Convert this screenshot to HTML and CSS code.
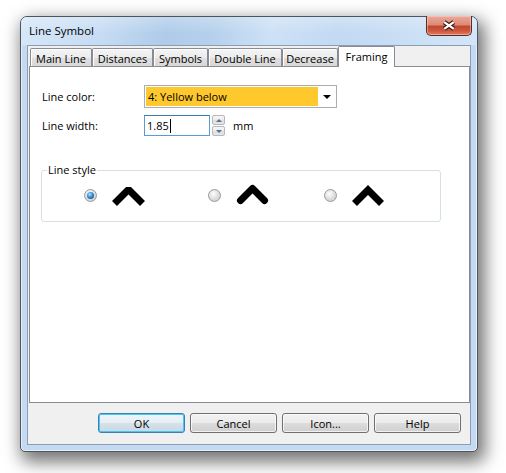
FILE: index.html
```html
<!DOCTYPE html>
<html lang="en">
<head>
    <meta charset="UTF-8">
    <title>Line Symbol</title>
    <link rel="stylesheet" href="styles.css">
</head>
<body>
    <div class="window">
        <div class="titlebar">
            <span class="title">Line Symbol</span>
            <button class="close-btn" title="Close">
                <svg width="46" height="19" viewBox="0 0 46 19">
                    <path d="M18 6 L28 13 M28 6 L18 13" stroke="#3b1710" stroke-width="4.6" fill="none"/>
                    <path d="M18 6 L28 13 M28 6 L18 13" stroke="#fff" stroke-width="2.4" fill="none"/>
                </svg>
            </button>
        </div>

        <div class="client">
            <ul class="tabs">
                <li class="tab">Main Line</li>
                <li class="tab">Distances</li>
                <li class="tab">Symbols</li>
                <li class="tab">Double Line</li>
                <li class="tab">Decrease</li>
                <li class="tab active">Framing</li>
            </ul>

            <div class="panel">
                <div class="form">
                    <label>Line color:</label>
                    <div class="combo">
                        <span class="combo-value">4: Yellow below</span>
                        <span class="combo-arrow"></span>
                    </div>

                    <label>Line width:</label>
                    <div class="width-field">
                        <div class="edit">1.85<span class="caret"></span></div>
                        <div class="spin">
                            <span class="spin-btn up"></span>
                            <span class="spin-btn down"></span>
                        </div>
                        <span class="unit">mm</span>
                    </div>
                </div>

                <fieldset class="group">
                    <legend>Line style</legend>
                    <div class="style-row">
                        <div class="style-option">
                            <span class="radio checked"></span>
                            <svg width="36" height="26" viewBox="0 0 36 26">
                                <polyline points="4.5,21.5 18.5,7.5 32.5,21.5" fill="none" stroke="#000" stroke-width="7" stroke-linejoin="bevel" stroke-linecap="butt"/>
                            </svg>
                        </div>
                        <div class="style-option">
                            <span class="radio"></span>
                            <svg width="36" height="26" viewBox="0 0 36 26">
                                <polyline points="6.5,18.5 18.5,6.5 30.5,18.5" fill="none" stroke="#000" stroke-width="7" stroke-linejoin="round" stroke-linecap="round"/>
                            </svg>
                        </div>
                        <div class="style-option">
                            <span class="radio"></span>
                            <svg width="36" height="26" viewBox="0 0 36 26">
                                <polyline points="4.5,21.5 18,8 31.5,21.5" fill="none" stroke="#000" stroke-width="7" stroke-linejoin="miter" stroke-linecap="butt"/>
                            </svg>
                        </div>
                    </div>
                </fieldset>
            </div>

            <div class="buttons">
                <button class="btn default">OK</button>
                <button class="btn">Cancel</button>
                <button class="btn">Icon...</button>
                <button class="btn">Help</button>
            </div>
        </div>
    </div>
</body>
</html>
```

FILE: styles.css
```css
*{
    box-sizing: border-box;
}

body{
    margin: 0;
    min-height: 100vh;
    padding: 16px 0 0 20px;
    background: #fff;
    color: #000;
    font: 11px "Segoe UI", "Open Sans", sans-serif;
}

/* window frame */
.window{
    width: 458px;
    height: 436px;
    padding: 0 6px 6px;
    display: flex;
    flex-direction: column;
    border: 1px solid #4d555e;
    border-radius: 7px 7px 5px 5px;
    background: #c3daf2;
    box-shadow: inset 0 0 0 1px rgba(255,255,255,.6), 4px 7px 17px 3px rgba(0,0,0,.55);
}

.titlebar{
    height: 28px;
    margin: 0 -6px;
    padding: 0 5px 0 8px;
    display: flex;
    justify-content: space-between;
    align-items: flex-start;
    border-radius: 6px 6px 0 0;
    background:
        linear-gradient(rgba(255,255,255,.25), rgba(255,255,255,0) 60%),
        linear-gradient(100deg, #d6e7f8 0%, #c6dcf3 18%, #aecbe9 32%, #b5d0ec 42%, #cde1f6 55%, #c2d9f2 70%, #d3e5f8 100%);
}

.title{
    padding-top: 6px;
    line-height: 16px;
    font-size: 11.5px;
}

.close-btn{
    width: 46px;
    height: 20px;
    margin-top: -1px;
    padding: 0;
    display: flex;
    border: 1px solid #5e2b22;
    border-top: none;
    border-radius: 0 0 5px 5px;
    background: linear-gradient(#e9aa9b, #dd8b77 45%, #c4472e 55%, #cc5a40 80%, #e07f63);
    box-shadow: inset 0 0 0 1px rgba(255,220,210,.45);
}

/* client area */
.client{
    flex: 1;
    display: flex;
    flex-direction: column;
    padding-bottom: 11px;
    border: 1px solid #8c9db2;
    background: #f0f0f0;
}

.tabs{
    height: 20px;
    margin: 0;
    padding: 0 0 0 2px;
    list-style: none;
    display: grid;
    grid-template-columns: 62px 61px 55px 74px 56px 57px;
    align-items: end;
}

.tab{
    height: 18px;
    line-height: 17px;
    padding-top: 1px;
    text-align: center;
    white-space: nowrap;
    border: 1px solid #898c95;
    border-bottom: none;
    border-radius: 2px 2px 0 0;
    background: linear-gradient(#f4f4f4, #ececec 50%, #e0e0e0 50%, #d8d8d8);
    box-shadow: inset 1px 1px 0 #fff;
}

.tab.active{
    position: relative;
    z-index: 1;
    height: 21px;
    margin-bottom: -1px;
    padding-top: 0;
    line-height: 19px;
    background: #fff;
    box-shadow: none;
}

.panel{
    height: 337px;
    margin-left: 1px;
    border: 1px solid #898c95;
    background: #fff;
}

/* fields */
.form{
    padding: 18px 0 0 12px;
    display: grid;
    grid-template-columns: 102px auto;
    row-gap: 7px;
    align-items: center;
}

.combo{
    width: 193px;
    height: 23px;
    padding: 1px;
    display: flex;
    border: 1px solid #abadb3;
    background: #fff;
}

.combo-value{
    width: 172px;
    padding-left: 2px;
    line-height: 19px;
    background: #ffc82c;
}

.combo-arrow{
    flex: 1;
    display: flex;
    justify-content: center;
    align-items: center;
}

.combo-arrow::after{
    content: "";
    border-left: 4px solid transparent;
    border-right: 4px solid transparent;
    border-top: 4px solid #000;
}

.width-field{
    display: flex;
    align-items: center;
}

.edit{
    width: 66px;
    height: 21px;
    padding-left: 2px;
    line-height: 19px;
    border: 1px solid #5a9bd6;
    border-top-color: #3d7bad;
    background: #fff;
}

.caret{
    display: inline-block;
    width: 1px;
    height: 14px;
    margin-left: 1px;
    vertical-align: -3px;
    background: #000;
}

.spin{
    margin-left: 2px;
    display: flex;
    flex-direction: column;
    gap: 1px;
}

.spin-btn{
    width: 13px;
    height: 10px;
    display: flex;
    justify-content: center;
    align-items: center;
    border: 1px solid #b8b8b8;
    border-radius: 2px;
    background: linear-gradient(#f7f7f7, #ececec 50%, #dedede 50%, #e6e6e6);
}

.spin-btn.up::after{
    content: "";
    border-left: 3px solid transparent;
    border-right: 3px solid transparent;
    border-bottom: 3px solid #5b6f97;
}

.spin-btn.down::after{
    content: "";
    border-left: 3px solid transparent;
    border-right: 3px solid transparent;
    border-top: 3px solid #5b6f97;
}

.unit{
    margin-left: 8px;
}

/* line style group */
.group{
    width: 400px;
    margin: 26px 0 0 11px;
    padding: 4px 0 13px;
    border: 1px solid #d5dfe5;
    border-radius: 3px;
}

.group legend{
    margin-left: 5px;
    padding: 0 1px;
    line-height: 16px;
}

.style-row{
    padding-left: 42px;
    display: grid;
    grid-template-columns: 124px 116px auto;
}

.style-option{
    display: flex;
    align-items: center;
    gap: 13px;
}

.radio{
    position: relative;
    width: 13px;
    height: 13px;
    border: 1px solid #9a9a9a;
    border-radius: 50%;
    background: radial-gradient(circle at 40% 35%, #fdfdfd, #dcdcdc 55%, #c6c6c6);
}

.radio.checked::after{
    content: "";
    position: absolute;
    left: 2px;
    top: 2px;
    width: 7px;
    height: 7px;
    border-radius: 50%;
    background: radial-gradient(circle at 40% 35%, #b3e6ff, #2f8fd2 45%, #0d3f78);
}

/* dialog buttons */
.buttons{
    margin-top: 10px;
    padding-right: 9px;
    display: flex;
    justify-content: flex-end;
    gap: 5px;
}

.btn{
    width: 87px;
    height: 20px;
    padding: 0;
    font: inherit;
    color: #000;
    border: 1px solid #707070;
    border-radius: 3px;
    background: linear-gradient(#f2f2f2, #ebebeb 50%, #dddddd 50%, #cfcfcf);
    box-shadow: inset 0 0 0 1px rgba(255,255,255,.7);
}

.btn.default{
    border-color: #3c7fb1;
    box-shadow: inset 0 0 0 1px #48c7f5;
    background: linear-gradient(#eef5fa, #e6eef4 50%, #d6e1ea 50%, #cbd8e2);
}
```
